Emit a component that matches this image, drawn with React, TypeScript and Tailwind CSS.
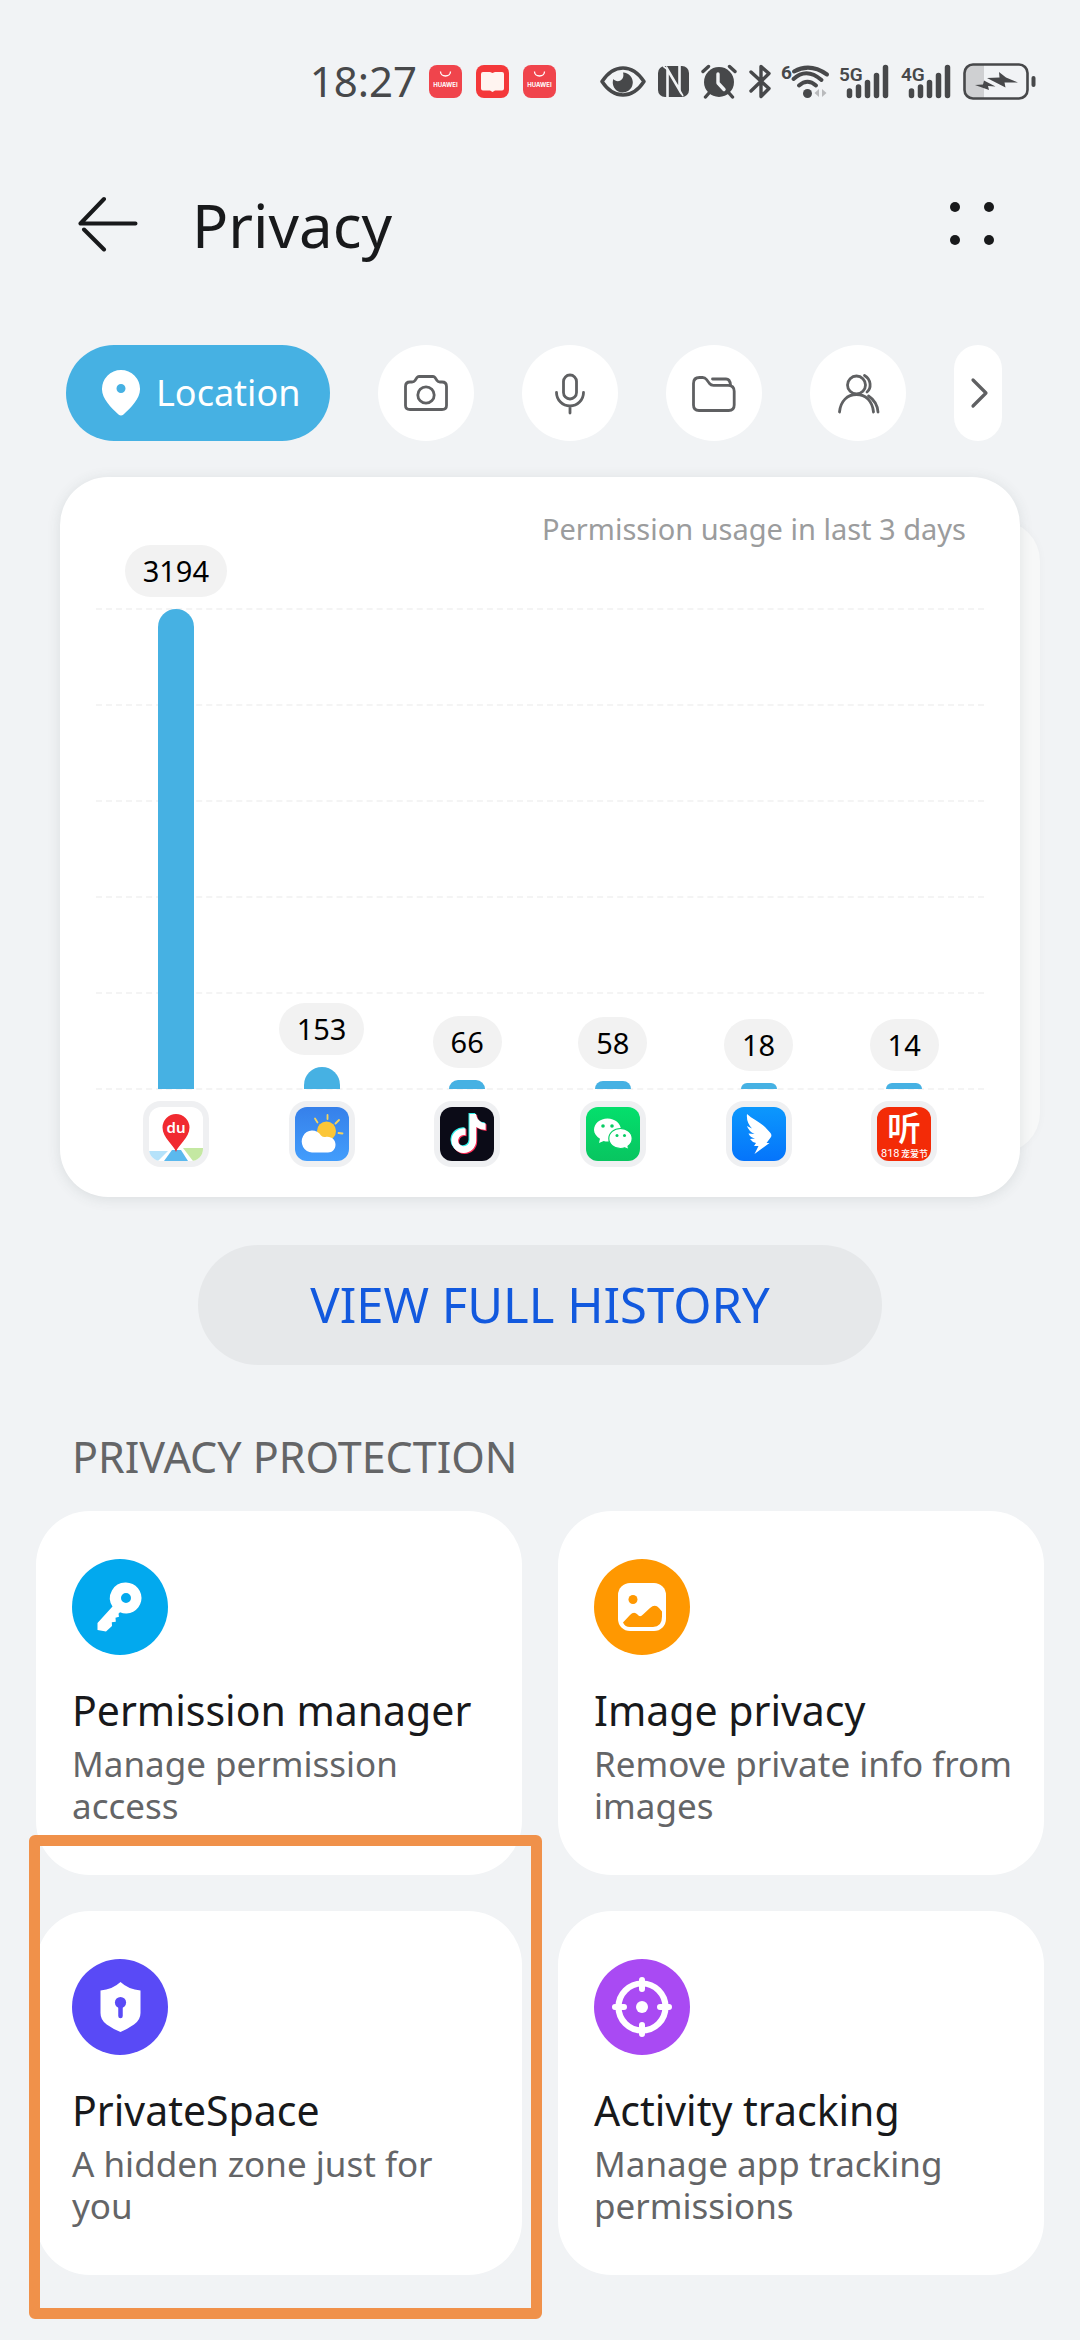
import type { ReactNode } from "react";
import { FaTiktok } from "react-icons/fa6";

const INK = "#47484a";

/* ---------- status bar ---------- */

function StoreIcon() {
  return (
    <svg width="33" height="33" viewBox="0 0 33 33" aria-hidden="true">
      <rect width="33" height="33" rx="8" fill="#f0444c" />
      <path d="M11.500 6.500a5 4.500 0 0 0 10 0" fill="none" stroke="#fff" strokeWidth="1.300" />
      <text x="16.500" y="21.500" textAnchor="middle" fontSize="6" fontWeight="700" fill="#fff" fontFamily="Inter, sans-serif">
        HUAWEI
      </text>
    </svg>
  );
}

function ReaderIcon() {
  return (
    <svg width="33" height="33" viewBox="0 0 33 33" aria-hidden="true">
      <rect width="33" height="33" rx="8" fill="#f4383a" />
      <path d="M5 9q0-2 2-2h7l2.500 1L19 7h7q2 0 2 2v14.500q0 2-2 2h-7l-2.500 1.500-2.500-1.500H7q-2 0-2-2z" fill="#fff4f0" />
    </svg>
  );
}

function EyeIcon() {
  return (
    <svg width="46" height="33" viewBox="0 0 46 33" aria-hidden="true">
      <path d="M2 16.500Q11 3 23 3t21 13.500Q35 30 23 30T2 16.500z" fill="none" stroke={INK} strokeWidth="3.500" strokeLinejoin="round" />
      <path d="M23 7.500a10 10 0 1 1-9.600 6.500c1.500 2 4.500 3 7 1.500 3-1.800 3.500-5 2.600-8z" fill={INK} />
    </svg>
  );
}

function NfcIcon() {
  return (
    <svg width="31" height="33" viewBox="0 0 31 33" aria-hidden="true">
      <rect y="1" width="31" height="31" rx="7" fill={INK} />
      <path d="M9.500 32V4.500L21.500 25V0" fill="none" stroke="#f1f3f5" strokeWidth="2.600" />
      <path d="M5 1l4.500 3.500M21.500 25 25 31" fill="none" stroke="#f1f3f5" strokeWidth="1.600" />
    </svg>
  );
}

function AlarmIcon() {
  return (
    <svg width="36" height="35" viewBox="0 0 36 35" aria-hidden="true">
      <circle cx="18" cy="18" r="15" fill={INK} />
      <path d="M2 7.500l5.500-5M34 7.500l-5.500-5M8 29l-3.500 4M28 29l3.500 4" stroke={INK} strokeWidth="3.400" strokeLinecap="round" />
      <path d="M17 10v9l6 6.500" fill="none" stroke="#f1f3f5" strokeWidth="3.400" strokeLinecap="round" strokeLinejoin="round" />
    </svg>
  );
}

function BluetoothIcon() {
  return (
    <svg width="22" height="35" viewBox="0 0 22 35" aria-hidden="true">
      <path d="M2 8l18 16.500-8 8V2.500l8 7L2 27" fill="none" stroke={INK} strokeWidth="3.400" strokeLinecap="round" strokeLinejoin="round" />
    </svg>
  );
}

function WifiIcon() {
  return (
    <svg width="48" height="36" viewBox="0 0 48 36" className="-mx-0.5 overflow-visible" aria-hidden="true">
      <text x="0" y="16" fontSize="19" fontWeight="700" fill={INK} fontFamily="Roboto, sans-serif">6</text>
      <path d="M13 8.500q16-9 33 3M12.500 16q13-12 28 1M18 22.500q8.500-7.500 17 0" fill="none" stroke={INK} strokeWidth="4" strokeLinecap="round" />
      <circle cx="26.500" cy="30.500" r="4.500" fill={INK} />
      <path d="M38 26v8l-4.500-4zM41 26v8l4.500-4z" fill="#b9babc" />
    </svg>
  );
}

function SignalIcon({ label }: { label: string }) {
  return (
    <svg width="50" height="35" viewBox="0 0 50 35" className="overflow-visible" aria-label={label}>
      <text x="0" y="17" fontSize="19" fontWeight="600" fill={INK} fontFamily="Roboto, sans-serif">{label}</text>
      <path d="M10.500 27v4.500M19.500 23v8.500M28.500 18.500v13M37.500 11.500v20M46.500 3.500v28" stroke={INK} strokeWidth="5.500" strokeLinecap="round" />
    </svg>
  );
}

function BatteryIcon() {
  return (
    <svg width="73" height="37" viewBox="0 0 73 37" aria-label="Battery charging">
      <path d="M9 2h12v33H9q-7 0-7-7V9q0-7 7-7z" fill="#cfd0d2" />
      <rect x="1.500" y="1.500" width="63" height="34" rx="8.500" fill="none" stroke={INK} strokeWidth="2.600" />
      <rect x="68.500" y="13" width="4" height="11" rx="2" fill={INK} />
      <path d="M36 9l7 5.500 12 5-13.500 0 1 5L24 15l12.500-.500zM21 17.500l11.500 6-7.500-.500 1 4L12 22l8-.500z" fill={INK} />
    </svg>
  );
}

function StatusBar() {
  return (
    <div className="mt-10 flex h-20 items-center justify-end pr-11 pt-0.5">
      <span className="mr-3 text-[42px] leading-none text-[#47484a]">18:27</span>
      <div className="mr-11 flex gap-3.5">
        <StoreIcon />
        <ReaderIcon />
        <StoreIcon />
      </div>
      <div className="flex items-center gap-3">
        <EyeIcon />
        <NfcIcon />
        <AlarmIcon />
        <BluetoothIcon />
        <WifiIcon />
        <SignalIcon label="5G" />
        <SignalIcon label="4G" />
        <BatteryIcon />
      </div>
    </div>
  );
}

/* ---------- header ---------- */

function Header() {
  return (
    <header className="mt-14 flex h-24 items-center pl-[78px] pr-[84px]">
      <button type="button" aria-label="Back">
        <svg width="60" height="56" viewBox="0 0 60 56" fill="none" stroke="#18191b" strokeWidth="4" strokeLinecap="round">
          <path d="M26 3L2.500 27.500H57.500" strokeLinejoin="round" />
          <path d="M6 33.500L26 53.500" />
        </svg>
      </button>
      <h1 className="ml-[54px] flex-1 pt-0.5 text-[60px] leading-none text-[#18191b]">Privacy</h1>
      <button type="button" aria-label="More options">
        <svg width="48" height="48" viewBox="0 0 48 48" fill="#18191b">
          <circle cx="7" cy="7" r="5" />
          <circle cx="41" cy="7" r="5" />
          <circle cx="7" cy="40" r="5" />
          <circle cx="41" cy="40" r="5" />
        </svg>
      </button>
    </header>
  );
}

/* ---------- permission chips ---------- */

function Line({ children }: { children: ReactNode }) {
  return (
    <svg width="48" height="48" viewBox="0 0 48 48" fill="none" stroke="#5f6062" strokeWidth="2.800" strokeLinecap="round" strokeLinejoin="round">
      {children}
    </svg>
  );
}

const chips: { label: string; icon: ReactNode }[] = [
  {
    label: "Camera",
    icon: (
      <Line>
        <path d="M8 13h2q2 0 3-1.500l2-3q.7-1 2-1h14q1.300 0 2 1l2 3q1 1.500 3 1.500h2q4.500 0 4.500 4.500v19q0 4-4.500 4H8q-4.500 0-4.500-4v-19Q3.500 13 8 13z" />
        <circle cx="24" cy="26" r="8.200" />
      </Line>
    ),
  },
  {
    label: "Microphone",
    icon: (
      <Line>
        <rect x="17.500" y="6" width="13" height="24" rx="6.500" />
        <path d="M10.500 23.500a13.500 13.500 0 0 0 27 0M24 37v7" />
      </Line>
    ),
  },
  {
    label: "Files",
    icon: (
      <Line>
        <path d="M3.500 14.500q0-6 6-6h3q2.500 0 4 2l3 4q1.500 1.800 4 1.800h14.500q6.200 0 6.200 6V36q0 5.500-5.500 5.500H9q-5.500 0-5.500-5.500z" />
        <path d="M22.500 10h13.500q4 0 4.500 6" />
      </Line>
    ),
  },
  {
    label: "Contacts",
    icon: (
      <Line>
        <circle cx="22.500" cy="16" r="9" />
        <path d="M5.500 43c1-11 8-17.500 17-17.500s16 6.500 17 17.500" />
        <path d="M30.500 6.500c7 4 7 13 2.500 16.500M34.500 27c6 4 9 9 9.500 16" />
      </Line>
    ),
  },
];

function Chips() {
  return (
    <nav className="flex h-24 items-stretch gap-12 pl-[66px] pr-[78px]" aria-label="Permissions">
      <button type="button" className="flex w-[264px] shrink-0 items-center rounded-full bg-[#46b1e3] pl-9 text-white">
        <svg width="38" height="46" viewBox="0 0 38 46" aria-hidden="true">
          <path fillRule="evenodd" fill="#fff" d="M19 0a19 19 0 0 1 19 19.500c0 9-9 18-16.500 25q-2.500 2-5 0C9 37.500 0 28.500 0 19.500A19 19 0 0 1 19 0zm0 14a4.500 4.500 0 1 0 0 9 4.500 4.500 0 0 0 0-9z" />
        </svg>
        <span className="ml-4 text-[36px] leading-none">Location</span>
      </button>
      {chips.map((chip) => (
        <button key={chip.label} type="button" aria-label={chip.label} className="flex w-24 shrink-0 items-center justify-center rounded-full bg-white">
          {chip.icon}
        </button>
      ))}
      <button type="button" aria-label="More permissions" className="flex w-12 shrink-0 items-center justify-center rounded-full bg-white pl-1">
        <svg width="20" height="32" viewBox="0 0 20 32" fill="none" stroke="#5f6062" strokeWidth="3.200" strokeLinecap="round" strokeLinejoin="round">
          <path d="M3 3l13 13L3 29" />
        </svg>
      </button>
    </nav>
  );
}

/* ---------- app icons ---------- */

function AppSvg({ children }: { children: ReactNode }) {
  return (
    <svg width="54" height="54" viewBox="0 0 54 54" className="rounded-xl" aria-hidden="true">
      {children}
    </svg>
  );
}

const BaiduMap = (
  <AppSvg>
    <rect width="54" height="54" fill="#fff" />
    <path d="M0 44h19L9 54H0z" fill="#b5e2fa" />
    <path d="M23 43h9l7 11H15z" fill="#5bb9ee" />
    <path d="M34 41h20v13H44z" fill="#c4e8a2" />
    <path d="M27 45c-2-7-13.500-14-13.500-24.500a13.500 13.500 0 0 1 27 0C40.500 31 29 38 27 45z" fill="#f12a30" />
    <text x="27" y="26" textAnchor="middle" fontSize="15" fontWeight="600" fill="#fff" fontFamily="Noto Sans, sans-serif">du</text>
  </AppSvg>
);

const Weather = (
  <AppSvg>
    <defs>
      <linearGradient id="sky" x1="0" y1="0" x2="0" y2="1">
        <stop offset="0" stopColor="#3680ea" />
        <stop offset="1" stopColor="#429dfc" />
      </linearGradient>
    </defs>
    <rect width="54" height="54" fill="url(#sky)" />
    <path d="M32.500 8v4M20 11.500l2.500 4M44 13l-3.500 3.500M43.500 26l4 .500" stroke="#f6d35c" strokeWidth="1.800" strokeLinecap="round" />
    <circle cx="31.500" cy="24" r="9.500" fill="#fbc638" />
    <path d="M17 45.500a10.500 11 0 1 1 9-17q2 2 4.500 1.500c6-1 10 3 10 7.500s-3 8-7.500 8z" fill="#fff" />
  </AppSvg>
);

const Douyin = (
  <AppSvg>
    <rect width="54" height="54" fill="#0b0b17" />
    <FaTiktok x={8} y={6} size={39} color="#2ff0ea" />
    <FaTiktok x={10} y={8} size={39} color="#fb2c55" />
    <FaTiktok x={9} y={7} size={39} color="#fff" />
  </AppSvg>
);

const WeChat = (
  <AppSvg>
    <defs>
      <linearGradient id="leaf" x1="0" y1="0" x2="0" y2="1">
        <stop offset="0" stopColor="#04df6c" />
        <stop offset="1" stopColor="#08c560" />
      </linearGradient>
    </defs>
    <rect width="54" height="54" fill="url(#leaf)" />
    <path d="M21.500 11.500c7.500 0 13.500 5 13.500 11.500s-6 11.500-13.500 11.500q-2 0-3.800-.5L13 36l1-4.200C10.500 29.500 8 26.500 8 23c0-6.500 6-11.500 13.500-11.500z" fill="#fff" />
    <path d="M34.500 21.500c6.500 0 11.700 4.400 11.700 10 0 3.200-1.700 5.800-4.200 7.700l.8 3.300-4-1.700q-2 .7-4.300.7c-6.500 0-11.700-4.400-11.700-10s5.200-10 11.700-10z" fill="#fff" stroke="#06cf65" strokeWidth="1.200" />
    <g fill="#07cc64">
      <circle cx="17" cy="19" r="1.800" />
      <circle cx="26" cy="19" r="1.800" />
      <circle cx="31" cy="28.500" r="1.500" />
      <circle cx="38.500" cy="28.500" r="1.500" />
    </g>
  </AppSvg>
);

const DingTalk = (
  <AppSvg>
    <defs>
      <linearGradient id="wing" x1="0" y1="0" x2="0" y2="1">
        <stop offset="0" stopColor="#0c98fd" />
        <stop offset="1" stopColor="#0574fb" />
      </linearGradient>
    </defs>
    <rect width="54" height="54" fill="url(#wing)" />
    <path d="M15 7c5 5 13 8 18 13l5.500 6q1.500 2 .5 4L34.500 36h3L22.500 47l4-8h-4.500l2-3q-4-1-6-4l5-.5q-5-1-6.500-5l6 .5q-6-3-7.500-8l5 2.500Q14 15 15 7z" fill="#fff" />
  </AppSvg>
);

const Listen = (
  <AppSvg>
    <rect width="54" height="54" fill="#f32b07" />
    <text x="27" y="34" textAnchor="middle" fontSize="34" fontWeight="500" fill="#fff" fontFamily="Noto Sans CJK SC, sans-serif">听</text>
    <text x="4" y="50" fontSize="11" fill="#fff" fontFamily="Roboto, sans-serif">818</text>
    <text x="24" y="50" fontSize="9" fontWeight="500" fill="#fff" fontFamily="Noto Sans CJK SC, sans-serif">宠爱节</text>
  </AppSvg>
);

/* ---------- usage chart ---------- */

const usage: { app: string; count: number; height: number; icon: ReactNode }[] = [
  { app: "Baidu Maps", count: 3194, height: 480, icon: BaiduMap },
  { app: "Weather", count: 153, height: 22, icon: Weather },
  { app: "Douyin", count: 66, height: 9, icon: Douyin },
  { app: "WeChat", count: 58, height: 8, icon: WeChat },
  { app: "DingTalk", count: 18, height: 6, icon: DingTalk },
  { app: "Listen", count: 14, height: 6, icon: Listen },
];

const gridLines = [0, 1, 2, 3, 4, 5];

function UsageCard() {
  return (
    <section className="relative mx-[60px] mt-9">
      <div className="absolute -right-5 bottom-11 top-11 w-24 rounded-[40px] bg-[#f7f8f8] shadow-[0_0_8px_rgba(0,0,0,0.03)]" />
      <div className="relative rounded-[48px] bg-white pb-[30px] pt-8 shadow-[0_2px_14px_rgba(60,70,70,0.12)]">
        <p className="pr-[54px] text-right text-[29px] leading-10 text-[#9b9c9d]">Permission usage in last 3 days</p>
        <div className="relative mt-[-4px]">
          <div className="absolute inset-x-9 bottom-[77px] flex h-[482px] flex-col justify-between">
            {gridLines.map((n) => (
              <div key={n} className="border-t-2 border-dashed border-[#f4f4f4]" />
            ))}
          </div>
          <div className="relative flex items-end px-[43px]">
            {usage.map((item) => (
              <div key={item.app} className="flex flex-1 flex-col items-center">
                <span className="mb-3 rounded-full bg-[#f2f2f2] px-[18px] text-[29px] leading-[52px] text-black">{item.count}</span>
                <div className="w-9 rounded-t-[18px] bg-[#46b1e3]" style={{ height: item.height }} />
                <div className="mt-3 rounded-[18px] bg-[#eff0f2] p-1.5">{item.icon}</div>
              </div>
            ))}
          </div>
        </div>
      </div>
    </section>
  );
}

/* ---------- privacy protection ---------- */

const features: { title: string; text: string; color: string; marked?: boolean; glyph: ReactNode }[] = [
  {
    title: "Permission manager",
    text: "Manage permission access",
    color: "bg-[#02a9ee]",
    glyph: (
      <path
        fillRule="evenodd"
        d="M54 23.500a15.500 15.500 0 1 1-6 29.800l-1.500 1.500.5 3-3.500 1 .3 4-4 .500.2 3.700L34 72.500l-8.500-1.500V64l15-16.500A15.500 15.500 0 0 1 54 23.500zm0 10.500a5 5 0 1 0 0 10 5 5 0 0 0 0-10z"
      />
    ),
  },
  {
    title: "Image privacy",
    text: "Remove private info from images",
    color: "bg-[#ff9801]",
    glyph: (
      <>
        <rect x="24" y="24" width="48" height="48" rx="12" />
        <g fill="#ff9801">
          <circle cx="39" cy="40.500" r="4.500" />
          <path d="M29 63.500l7-7.500q4-4 7.500-.500 2.500 3.500 5.500 0l7-6.500q5-4.500 9 0l3 3.500v5q0 10.500-9 10.500H36q-5 0-7-4.500z" />
        </g>
      </>
    ),
  },
  {
    title: "PrivateSpace",
    text: "A hidden zone just for you",
    color: "bg-[#594af6]",
    marked: true,
    glyph: (
      <>
        <path d="M48.500 23q8 7.500 20 8.500V54q0 7-6.500 11.500T48.500 73Q41 70 34.700 65.500T28.500 54V31.500Q40.500 30.500 48.500 23z" />
        <circle cx="48.500" cy="43.500" r="5.600" fill="#594af6" />
        <path d="M48.500 44v13" stroke="#594af6" strokeWidth="4.500" strokeLinecap="round" />
      </>
    ),
  },
  {
    title: "Activity tracking",
    text: "Manage app tracking permissions",
    color: "bg-[#a94af3]",
    glyph: (
      <>
        <circle cx="48" cy="48" r="23.500" fill="none" stroke="#fff" strokeWidth="6.200" />
        <path d="M48 21v9M48 66v9M21 48h9M66 48h9" stroke="#fff" strokeWidth="6" strokeLinecap="round" />
        <circle cx="48" cy="48" r="6" />
      </>
    ),
  },
];

function FeatureGrid() {
  return (
    <div className="grid grid-cols-2 gap-9 px-9">
      {features.map((item) => (
        <div key={item.title} className="relative">
          <button type="button" className="flex w-full flex-col items-start rounded-[54px] bg-white pb-12 pl-9 pr-6 pt-12 text-left">
            <span className={`rounded-full ${item.color}`}>
              <svg width="96" height="96" viewBox="0 0 96 96" fill="#fff" aria-hidden="true">
                {item.glyph}
              </svg>
            </span>
            <span className="mt-7 text-[41px] leading-[54px] text-[#18191b]">{item.title}</span>
            <span className="mt-1.5 text-[35px] leading-[42px] text-[#646567]">{item.text}</span>
          </button>
          {item.marked && (
            <div className="pointer-events-none absolute -bottom-11 -left-[7px] -right-5 -top-[76px] z-10 rounded-md border-[11px] border-[#f0914a]" />
          )}
        </div>
      ))}
    </div>
  );
}

export default function App() {
  return (
    <div className="min-h-screen overflow-x-hidden bg-[#f1f3f5] pb-16 font-['Noto_Sans','Noto_Sans_CJK_SC',sans-serif]">
      <StatusBar />
      <Header />
      <main className="mt-[73px]">
        <Chips />
        <UsageCard />
        <div className="mt-12 flex justify-center">
          <button type="button" className="h-[120px] w-[684px] rounded-full bg-[#e6e8ea] text-[49px] text-[#1259de]">
            VIEW FULL HISTORY
          </button>
        </div>
        <h2 className="mb-6 mt-[62px] px-[72px] text-[43px] leading-[60px] text-[#646567]">PRIVACY PROTECTION</h2>
        <FeatureGrid />
      </main>
    </div>
  );
}
